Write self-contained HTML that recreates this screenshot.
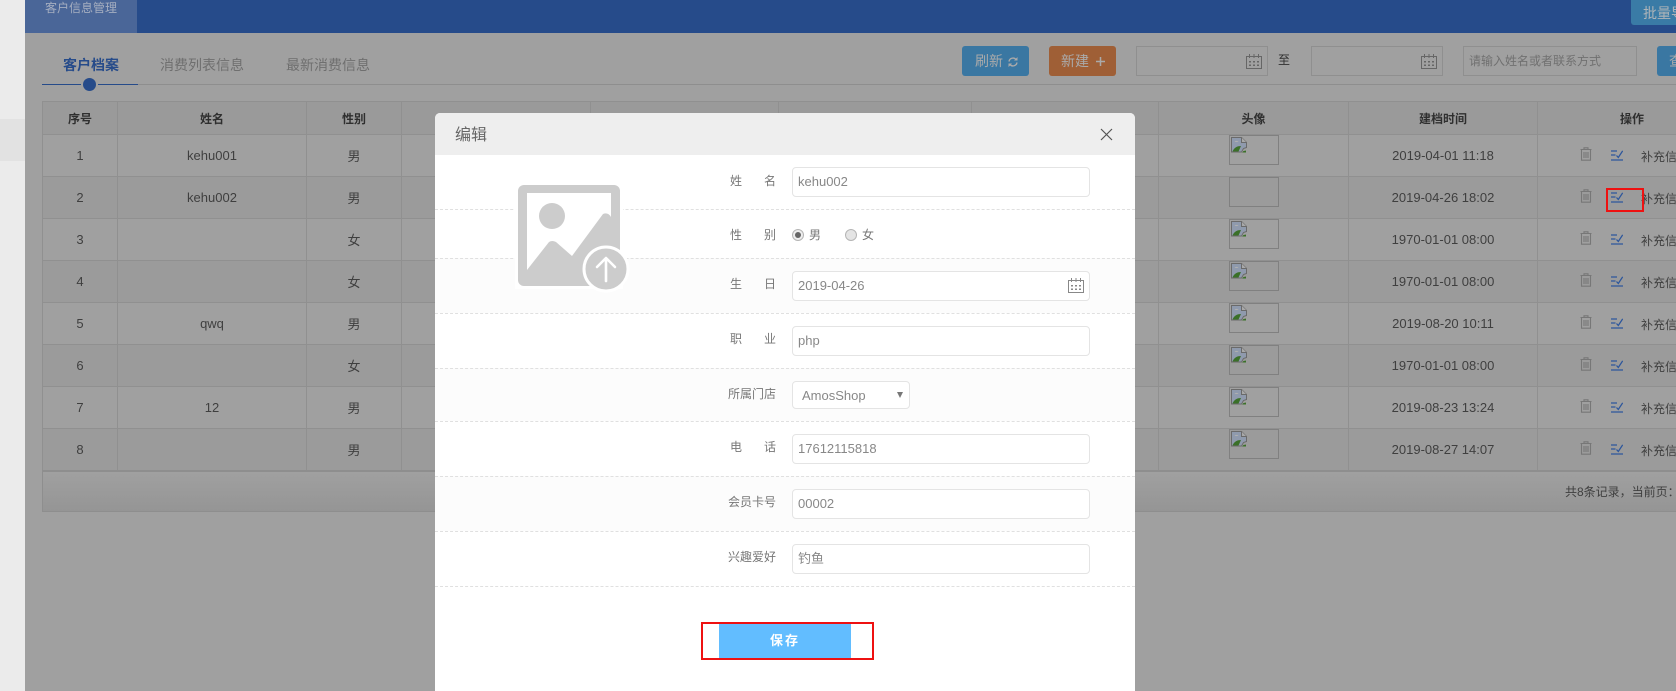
<!DOCTYPE html>
<html lang="zh-CN">
<head>
<meta charset="utf-8">
<title>客户信息管理</title>
<style>
html,body{margin:0;padding:0;width:1676px;height:691px;overflow:hidden;background:#a0a0a0}
body{position:relative;font-family:"Liberation Sans","Noto Sans CJK SC",sans-serif;font-size:13px;color:#3f3f3f}
.a{position:absolute}
.btn{border-radius:3px;color:#aaa;font-size:14px;line-height:30px}
.in{background:transparent;border:1px solid #8f8f8f;box-sizing:border-box;height:30px;top:46px;width:132px}
table{position:absolute;left:42px;top:101px;border-collapse:collapse;table-layout:fixed;width:1684px}
td,th{border:1px solid #909090;padding:0;text-align:center;font-size:13px;color:#3f3f3f;position:relative}
th{height:32px;background:#9a9a9a;font-size:12px;font-weight:700;color:#2f2f2f}
td{height:41px}
tr.o td{background:#a0a0a0}
tr.e td{background:#9b9b9b}
.pic{position:absolute;left:70px;top:0;width:50px;height:30px;box-sizing:border-box;border:1px solid #808080}
.pic svg{position:absolute;left:1px;top:1px}
.ops{position:absolute;left:0;top:0;width:139px;height:41px}
.ops .t{position:absolute;left:42px;top:12px}
.ops .k{position:absolute;left:73px;top:15px}
.ops span{position:absolute;left:103px;top:14px;font-size:12px;line-height:16px;white-space:nowrap;color:#3f3f3f}
.lb{position:absolute;display:flex;justify-content:space-between;font-size:12px;line-height:16px;color:#777;width:46px;left:295px}
.lb.f{width:48px;left:293px}
.ip{position:absolute;left:357px;width:298px;height:30px;box-sizing:border-box;border:1px solid #e4e4e4;border-radius:4px;background:#fff;color:#888;font-size:13px;line-height:28px;padding-left:5px}
.ds{position:absolute;left:0;width:700px;height:0;border-top:1px dashed #e0e0e0}
.bg{position:absolute;left:0;width:700px;background:#fcfcfc}
</style>
</head>
<body>
<svg width="0" height="0" style="position:absolute">
<defs>
<symbol id="trash" viewBox="0 0 12 14"><path d="M4 2V.8h4V2M.5 2.500h11M1.500 2.500v10.700h9V2.500M4 5v6M6 5v6M8 5v6" fill="none" stroke="currentColor" stroke-width="1.100"/></symbol>
<symbol id="edit" viewBox="0 0 12 11"><path d="M0 1h6M0 5h4.500M0 10h12M5.500 5.500l1.800 2L11.700.8" fill="none" stroke="#2c569c" stroke-width="1.300"/></symbol>
<symbol id="cal" viewBox="0 0 16 16"><path d="M.5 3.500h15v12H.5zM3.500 1v4M8 1v4M12.500 1v4" fill="none" stroke="currentColor"/><path d="M3 8h2v1.500H3zM7 8h2v1.500H7zM11 8h2v1.500h-2zM3 11.500h2V13H3zM7 11.500h2V13H7zM11 11.500h2V13h-2z" fill="currentColor"/></symbol>
<symbol id="brk" viewBox="0 0 16 16"><path d="M.5.5h10l5 5v5l-3 1-2 3.500H.5z" fill="#8f9aad" stroke="#6a6a6a"/><path d="M10.500.5v5h5" fill="#a8a8a8" stroke="#6a6a6a"/><path d="M1.500 14.500c1.500-4 5-5.500 8.500-5.500l-2.500 5.500z" fill="#3a7028"/><path d="M3.500 5c1-1.500 3-1.500 4 0z" fill="#b0b0b0"/><path d="M12.500 14l2.500-.5v2h-4z" fill="#3a7028"/></symbol>
</defs>
</svg>

<!-- sidebar -->
<div class="a" style="left:0;top:0;width:25px;height:691px;background:#ebebeb"></div>
<div class="a" style="left:0;top:119px;width:25px;height:42px;background:#e2e2e2"></div>

<!-- top bar -->
<div class="a" style="left:25px;top:0;width:1651px;height:33px;background:#264b8a"></div>
<div class="a" style="left:25px;top:0;width:112px;height:33px;background:#4a6698;color:#a5aec0;font-size:12px;line-height:17px;text-align:center">客户信息管理</div>
<div class="a" style="left:1631px;top:-3px;width:60px;height:28px;background:#3a7ba6;color:#aeb4b8;font-size:14px;line-height:26px;padding-left:12px;padding-top:3px;box-sizing:border-box;white-space:nowrap;border-radius:3px">批量导入</div>

<!-- tabs -->
<div class="a" style="left:63px;top:55px;font-size:14px;line-height:20px;font-weight:700;color:#264b8a">客户档案</div>
<div class="a" style="left:160px;top:55px;font-size:14px;line-height:20px;color:#6f6f6f">消费列表信息</div>
<div class="a" style="left:286px;top:55px;font-size:14px;line-height:20px;color:#6f6f6f">最新消费信息</div>
<div class="a" style="left:42px;top:84px;width:1634px;height:1px;background:#8e8e8e"></div>
<div class="a" style="left:42px;top:84px;width:96px;height:1px;background:#264b8a"></div>
<div class="a" style="left:81px;top:76px;width:17px;height:17px;border-radius:50%;background:#a0a0a0"></div>
<div class="a" style="left:83px;top:78px;width:13px;height:13px;border-radius:50%;background:#264b8a"></div>

<!-- toolbar -->
<div class="a btn" style="left:962px;top:46px;width:67px;height:30px;background:#3a77a2"><span class="a" style="left:13px;top:0">刷新</span>
<svg class="a" style="left:46px;top:11px" width="10" height="10" viewBox="0 0 10 10"><path d="M1 4.500a4 4 0 0 1 7-2M9 5.500a4 4 0 0 1-7 2" fill="none" stroke="#aaa" stroke-width="1.400"/><path d="M9.500 0v3.500H6zM.5 10V6.500H4z" fill="#aaa"/></svg></div>
<div class="a btn" style="left:1049px;top:46px;width:67px;height:30px;background:#9f5f36"><span class="a" style="left:12px;top:0">新建</span>
<svg class="a" style="left:46px;top:10px" width="11" height="11" viewBox="0 0 11 11"><path d="M5.500 1v9M1 5.500h9" stroke="#aaa" stroke-width="1.500"/></svg></div>
<div class="a in" style="left:1136px"><svg class="a" style="left:109px;top:6px;color:#666" width="16" height="16"><use href="#cal"/></svg></div>
<div class="a" style="left:1278px;top:52px;font-size:12px;line-height:16px;color:#2f2f2f">至</div>
<div class="a in" style="left:1311px"><svg class="a" style="left:109px;top:6px;color:#666" width="16" height="16"><use href="#cal"/></svg></div>
<div class="a in" style="left:1463px;width:174px;font-size:12px;line-height:28px;color:#707070;padding-left:5px">请输入姓名或者联系方式</div>
<div class="a btn" style="left:1657px;top:46px;width:50px;height:30px;background:#3a77a2;padding-left:12px;white-space:nowrap">查询</div>

<!-- table -->
<table>
<colgroup><col style="width:75px"><col style="width:189px"><col style="width:95px"><col style="width:189px"><col style="width:188px"><col style="width:193px"><col style="width:187px"><col style="width:190px"><col style="width:189px"><col style="width:189px"></colgroup>
<tr><th>序号</th><th>姓名</th><th>性别</th><th></th><th></th><th></th><th></th><th>头像</th><th>建档时间</th><th>操作</th></tr>
<tr class="o"><td>1</td><td>kehu001</td><td>男</td><td></td><td></td><td></td><td></td><td><div class="pic"><svg width="16" height="16"><use href="#brk"/></svg></div></td><td>2019-04-01 11:18</td><td><div class="ops"><svg class="t" width="12" height="14" color="#777"><use href="#trash"/></svg><svg class="k" width="12" height="11"><use href="#edit"/></svg><span>补充信息</span></div></td></tr>
<tr class="e"><td>2</td><td>kehu002</td><td>男</td><td></td><td></td><td></td><td></td><td><div class="pic"></div></td><td>2019-04-26 18:02</td><td><div class="ops"><svg class="t" width="12" height="14" color="#777"><use href="#trash"/></svg><svg class="k" width="12" height="11"><use href="#edit"/></svg><span>补充信息</span></div></td></tr>
<tr class="o"><td>3</td><td></td><td>女</td><td></td><td></td><td></td><td></td><td><div class="pic"><svg width="16" height="16"><use href="#brk"/></svg></div></td><td>1970-01-01 08:00</td><td><div class="ops"><svg class="t" width="12" height="14" color="#777"><use href="#trash"/></svg><svg class="k" width="12" height="11"><use href="#edit"/></svg><span>补充信息</span></div></td></tr>
<tr class="e"><td>4</td><td></td><td>女</td><td></td><td></td><td></td><td></td><td><div class="pic"><svg width="16" height="16"><use href="#brk"/></svg></div></td><td>1970-01-01 08:00</td><td><div class="ops"><svg class="t" width="12" height="14" color="#777"><use href="#trash"/></svg><svg class="k" width="12" height="11"><use href="#edit"/></svg><span>补充信息</span></div></td></tr>
<tr class="o"><td>5</td><td>qwq</td><td>男</td><td></td><td></td><td></td><td></td><td><div class="pic"><svg width="16" height="16"><use href="#brk"/></svg></div></td><td>2019-08-20 10:11</td><td><div class="ops"><svg class="t" width="12" height="14" color="#777"><use href="#trash"/></svg><svg class="k" width="12" height="11"><use href="#edit"/></svg><span>补充信息</span></div></td></tr>
<tr class="e"><td>6</td><td></td><td>女</td><td></td><td></td><td></td><td></td><td><div class="pic"><svg width="16" height="16"><use href="#brk"/></svg></div></td><td>1970-01-01 08:00</td><td><div class="ops"><svg class="t" width="12" height="14" color="#777"><use href="#trash"/></svg><svg class="k" width="12" height="11"><use href="#edit"/></svg><span>补充信息</span></div></td></tr>
<tr class="o"><td>7</td><td>12</td><td>男</td><td></td><td></td><td></td><td></td><td><div class="pic"><svg width="16" height="16"><use href="#brk"/></svg></div></td><td>2019-08-23 13:24</td><td><div class="ops"><svg class="t" width="12" height="14" color="#777"><use href="#trash"/></svg><svg class="k" width="12" height="11"><use href="#edit"/></svg><span>补充信息</span></div></td></tr>
<tr class="e"><td>8</td><td></td><td>男</td><td></td><td></td><td></td><td></td><td><div class="pic"><svg width="16" height="16"><use href="#brk"/></svg></div></td><td>2019-08-27 14:07</td><td><div class="ops"><svg class="t" width="12" height="14" color="#777"><use href="#trash"/></svg><svg class="k" width="12" height="11"><use href="#edit"/></svg><span>补充信息</span></div></td></tr>
</table>

<!-- footer -->
<div class="a" style="left:42px;top:470px;width:1634px;height:42px;box-sizing:border-box;border-top:2px solid #8e8e8e;border-bottom:1px solid #8e8e8e;border-left:1px solid #8e8e8e;background:linear-gradient(#a0a0a0,#959595)"></div>
<div class="a" style="left:1565px;top:484px;font-size:12px;line-height:17px;color:#3f3f3f;white-space:nowrap;width:111px;overflow:hidden">共8条记录，当前页：1</div>

<!-- red edit highlight -->
<div class="a" style="left:1606px;top:188px;width:38px;height:24px;box-sizing:border-box;border:2px solid #ee1111"></div>

<!-- modal -->
<div class="a" style="left:435px;top:113px;width:700px;height:578px;background:#fff;border-radius:5px 5px 0 0;overflow:hidden">
  <div class="a" style="left:0;top:0;width:700px;height:42px;background:#eee"></div>
  <div class="a" style="left:20px;top:12px;font-size:16px;line-height:22px;color:#666">编辑</div>
  <svg class="a" style="left:665px;top:15px" width="13" height="13" viewBox="0 0 13 13"><path d="M1 1l11 11M12 1L1 12" stroke="#555" stroke-width="1.200"/></svg>

  <div class="bg" style="top:145px;height:55px"></div>
  <div class="bg" style="top:255px;height:53px"></div>
  <div class="bg" style="top:363px;height:55px"></div>

  <div class="ds" style="top:96px"></div>
  <div class="ds" style="top:145px"></div>
  <div class="ds" style="top:200px"></div>
  <div class="ds" style="top:255px"></div>
  <div class="ds" style="top:308px"></div>
  <div class="ds" style="top:363px"></div>
  <div class="ds" style="top:418px"></div>
  <div class="ds" style="top:473px"></div>

  <!-- upload image -->
  <svg class="a" style="left:80px;top:66px" width="120" height="114" viewBox="515 179 120 114">
    <rect x="515" y="182" width="108" height="107" fill="#fff"/>
    <rect x="518" y="185" width="102" height="101" rx="6" fill="#ccc"/>
    <path d="M527 193H611V217Q608 212 603 214L572 256L556 242Q552 240 549 242L527 270Z" fill="#fff"/>
    <circle cx="552" cy="216" r="13" fill="#ccc"/>
    <circle cx="606" cy="269" r="22" fill="#ccc" stroke="#fff" stroke-width="3"/>
    <path d="M606 281V258M597 267L606 258L615 267" fill="none" stroke="#fff" stroke-width="2.600" stroke-linecap="round" stroke-linejoin="round"/>
  </svg>

  <!-- form -->
  <div class="lb" style="top:60px"><span>姓</span><span>名</span></div>
  <div class="ip" style="top:54px">kehu002</div>

  <div class="lb" style="top:114px"><span>性</span><span>别</span></div>
  <div class="a" style="left:357px;top:116px;width:12px;height:12px;box-sizing:border-box;border-radius:50%;border:1px solid #b5b5b5;background:#eee"></div>
  <div class="a" style="left:360px;top:119px;width:6px;height:6px;border-radius:50%;background:#666"></div>
  <div class="a" style="left:374px;top:114px;font-size:12px;line-height:16px;color:#777">男</div>
  <div class="a" style="left:410px;top:116px;width:12px;height:12px;box-sizing:border-box;border-radius:50%;border:1px solid #b5b5b5;background:#e4e4e4"></div>
  <div class="a" style="left:427px;top:114px;font-size:12px;line-height:16px;color:#777">女</div>

  <div class="lb" style="top:163px"><span>生</span><span>日</span></div>
  <div class="ip" style="top:158px">2019-04-26<svg class="a" style="left:275px;top:5px;color:#888" width="16" height="16"><use href="#cal"/></svg></div>

  <div class="lb" style="top:218px"><span>职</span><span>业</span></div>
  <div class="ip" style="top:213px">php</div>

  <div class="lb f" style="top:273px"><span>所</span><span>属</span><span>门</span><span>店</span></div>
  <div class="ip" style="top:268px;width:118px;height:28px;padding-left:9px;line-height:27px">AmosShop<svg class="a" style="left:104px;top:10px" width="6" height="6" viewBox="0 0 6 6"><path d="M0 0h6L3 6z" fill="#777"/></svg></div>

  <div class="lb" style="top:326px"><span>电</span><span>话</span></div>
  <div class="ip" style="top:321px">17612115818</div>

  <div class="lb f" style="top:381px"><span>会</span><span>员</span><span>卡</span><span>号</span></div>
  <div class="ip" style="top:376px">00002</div>

  <div class="lb f" style="top:436px"><span>兴</span><span>趣</span><span>爱</span><span>好</span></div>
  <div class="ip" style="top:431px">钓鱼</div>

  <div class="a" style="left:284px;top:511px;width:132px;height:34px;background:#62bdff;color:#fff;font-size:13px;font-weight:700;line-height:34px;text-align:center;letter-spacing:2px">保存</div>
  <div class="a" style="left:266px;top:509px;width:173px;height:38px;box-sizing:border-box;border:2px solid #ee1111"></div>
</div>
</body>
</html>
